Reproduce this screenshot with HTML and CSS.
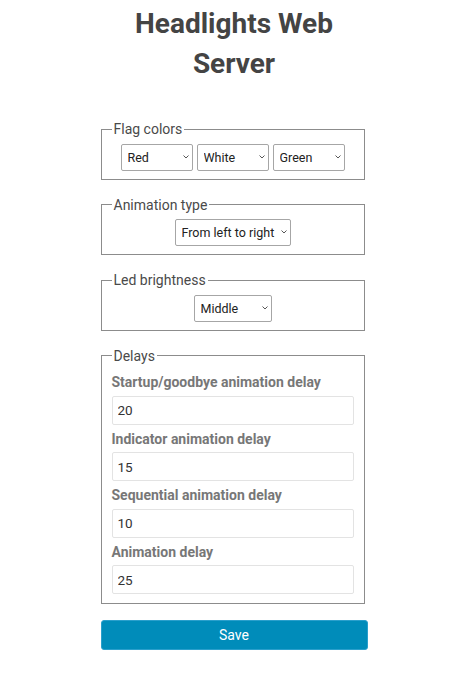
FILE: index.html
```html
<!DOCTYPE html>
<html>
<head>
<meta charset="utf-8">
<title>Headlights Web Server</title>
<link rel="stylesheet" href="styles.css">
</head>
<body>
<div class="page">
  <h1 class="title">Headlights Web Server</h1>
  <form class="form">
    <fieldset class="group choice">
      <legend>Flag colors</legend>
      <div class="center">
        <span class="sel-wrap"><select class="sel sel-flag"><option>Red</option></select><svg class="chev" viewBox="0 0 6 4"><path d="M0.5 0.5 L3 3 L5.5 0.5"/></svg></span>
        <span class="sel-wrap"><select class="sel sel-flag"><option>White</option></select><svg class="chev" viewBox="0 0 6 4"><path d="M0.5 0.5 L3 3 L5.5 0.5"/></svg></span>
        <span class="sel-wrap"><select class="sel sel-flag"><option>Green</option></select><svg class="chev" viewBox="0 0 6 4"><path d="M0.5 0.5 L3 3 L5.5 0.5"/></svg></span>
      </div>
    </fieldset>
    <fieldset class="group choice">
      <legend>Animation type</legend>
      <div class="center">
        <span class="sel-wrap"><select class="sel sel-anim"><option>From left to right</option></select><svg class="chev" viewBox="0 0 6 4"><path d="M0.5 0.5 L3 3 L5.5 0.5"/></svg></span>
      </div>
    </fieldset>
    <fieldset class="group choice">
      <legend>Led brightness</legend>
      <div class="center">
        <span class="sel-wrap"><select class="sel sel-bright"><option>Middle</option></select><svg class="chev" viewBox="0 0 6 4"><path d="M0.5 0.5 L3 3 L5.5 0.5"/></svg></span>
      </div>
    </fieldset>
    <fieldset class="group delays">
      <legend>Delays</legend>
      <label class="lbl">Startup/goodbye animation delay</label>
      <input class="num" type="text" value="20">
      <label class="lbl">Indicator animation delay</label>
      <input class="num" type="text" value="15">
      <label class="lbl">Sequential animation delay</label>
      <input class="num" type="text" value="10">
      <label class="lbl">Animation delay</label>
      <input class="num" type="text" value="25">
    </fieldset>
    <button class="save" type="button">Save</button>
  </form>
</div>
</body>
</html>
```
FILE: styles.css
```css
html, body {
  margin: 0;
  padding: 0;
  background: #fff;
}
body {
  font-family: Roboto, "Liberation Sans", Arial, sans-serif;
  color: #444;
}
.page {
  width: 267px;
  margin: 0 auto;
  padding-left: 1px;
}
.title {
  font-size: 28px;
  line-height: 40px;
  font-weight: 700;
  color: #444;
  text-align: center;
  margin: 4px 0 37px;
}
.form {
  font-size: 14px;
}
.group {
  margin: 0 3px 17px 0;
  padding: 4.5px 10px 9px;
  border: 1px solid #8c8c8c;
}
.choice {
  padding-top: 6.5px;
  padding-bottom: 8px;
}
.group legend {
  padding: 0 2px;
  font-size: 14px;
  color: #4a4a4a;
  line-height: 16px;
}
.center {
  display: flex;
  justify-content: center;
  gap: 4px;
}
.sel-wrap {
  position: relative;
  display: block;
}
.sel {
  display: block;
  -webkit-appearance: none;
  appearance: none;
  box-sizing: border-box;
  font-family: Roboto, "Liberation Sans", Arial, sans-serif;
  font-size: 12.5px;
  color: #222;
  height: 27px;
  border: 1px solid #a6a6a6;
  border-radius: 2px;
  background: #fff;
  padding: 0 14px 0 6px;
  margin: 0;
}
.chev {
  position: absolute;
  right: 4px;
  top: 11px;
  width: 6px;
  height: 4px;
  fill: none;
  stroke: #444;
  stroke-width: 0.9;
  pointer-events: none;
}
.sel-flag { width: 72px; }
.sel-anim { width: 116px; }
.sel-bright { width: 78px; }
.lbl {
  display: block;
  font-size: 14px;
  line-height: 16px;
  font-weight: 700;
  color: #777;
  margin: 6px 0 5.5px;
}
.num {
  display: block;
  box-sizing: border-box;
  width: 100%;
  height: 29px;
  margin: 0;
  padding: 6px 5px;
  border: 1px solid #e3e3e3;
  border-radius: 2px;
  font-family: Roboto, "Liberation Sans", Arial, sans-serif;
  font-size: 13.5px;
  color: #333;
  background: #fff;
}
.save {
  display: block;
  width: 267px;
  height: 30px;
  margin: -1px 0 0;
  padding: 0;
  border: 1px solid #2a9fcc;
  border-radius: 3px;
  background: #008cba;
  color: #fff;
  font-family: Roboto, "Liberation Sans", Arial, sans-serif;
  font-size: 14px;
}
```
